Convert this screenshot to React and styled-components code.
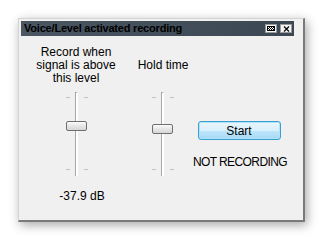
import React from 'react'
import styled, { createGlobalStyle } from 'styled-components'

const Global = createGlobalStyle`
  html, body {
    margin: 0;
    padding: 0;
    background: #ffffff;
  }
  body {
    font-family: "Liberation Sans", Arial, sans-serif;
    font-size: 12px;
    color: #000;
  }
`

const Page = styled.div`
  width: 323px;
  height: 240px;
  padding: 18px 0 0 18px;
  box-sizing: border-box;
`

const Window = styled.div`
  width: 287px;
  height: 204px;
  box-sizing: border-box;
  background: #f0f0f0;
  border-top: 1px solid #d4d4d4;
  border-left: 1px solid #d4d4d4;
  border-right: 2px solid #7a7a7a;
  border-bottom: 2px solid #7a7a7a;
  box-shadow: 2px 3px 10px rgba(0, 0, 0, 0.35);
  padding: 2px 9px 0 2px;
  display: flex;
  flex-direction: column;
`

const TitleBar = styled.div`
  height: 15px;
  background: linear-gradient(90deg, #4a5661, #3b4752);
  display: flex;
  align-items: center;
  padding: 0 2px 0 3px;
`

const Title = styled.div`
  flex: 1;
  font-weight: bold;
  font-size: 11px;
  letter-spacing: -0.2px;
  line-height: 15px;
  color: #000;
  white-space: nowrap;
`

const TitleButtons = styled.div`
  display: flex;
  gap: 3px;
`

const TitleButton = styled.div`
  width: 12px;
  height: 9px;
  box-sizing: border-box;
  background: #f4f4f4;
  border: 1px solid #9a9a9a;
  display: flex;
  align-items: center;
  justify-content: center;
`

const Body = styled.div`
  display: flex;
  flex: 1;
`

const Column = styled.div`
  width: ${p => p.$w}px;
  display: flex;
  flex-direction: column;
  align-items: center;
`

const LabelArea = styled.div`
  height: 50px;
  padding-top: 8px;
  box-sizing: border-box;
  display: flex;
  align-items: center;
  justify-content: center;
  text-align: center;
  line-height: 13px;
`

const SliderBox = styled.div`
  position: relative;
  width: 36px;
  height: 84px;
  margin-top: 6px;
  margin-left: ${p => p.$shift}px;
`

const Track = styled.div`
  position: absolute;
  left: 16px;
  top: 0;
  width: 1px;
  height: 83px;
  background: #a8a8a8;
  border-right: 2px solid #ffffff;
  border-top: 1px solid #a0a0a0;
`

const Tick = styled.div`
  position: absolute;
  width: 4px;
  height: 1px;
  background: #c0c0c0;
  top: ${p => p.$top}px;
  left: ${p => p.$left}px;
`

const Thumb = styled.div`
  position: absolute;
  left: 7px;
  top: ${p => p.$top}px;
  width: 21px;
  height: 10px;
  box-sizing: border-box;
  border: 1px solid #6e6e6e;
  border-radius: 2px;
  background: linear-gradient(#fbfbfb, #e6e6e6 50%, #d6d6d6);
`

const Value = styled.div`
  margin-top: 13px;
  padding-left: 12px;
`

const Actions = styled.div`
  display: flex;
  flex-direction: column;
  align-items: center;
  padding-top: 85px;
  width: 96px;
`

const StartButton = styled.button`
  width: 83px;
  height: 19px;
  margin-left: -8px;
  box-sizing: border-box;
  border: 1px solid #3c9fd1;
  border-radius: 3px;
  background: linear-gradient(#eaf6fd, #d9f0fc 50%, #bee6fd 51%, #a7d9f5);
  box-shadow: inset 0 0 0 1px #aee3fb;
  font-family: "Liberation Sans", Arial, sans-serif;
  font-size: 12px;
  color: #000;
  padding: 0;
`

const Status = styled.div`
  margin-top: 15px;
  margin-left: -6px;
  letter-spacing: -0.6px;
  white-space: nowrap;
`

function Slider({ thumb, shift = 0 }) {
  return (
    <SliderBox $shift={shift}>
      <Tick $top={5} $left={7} />
      <Tick $top={5} $left={25} />
      <Tick $top={77} $left={7} />
      <Tick $top={77} $left={25} />
      <Track />
      <Thumb $top={thumb} />
    </SliderBox>
  )
}

export default function App() {
  return (
    <Page>
      <Global />
      <Window>
        <TitleBar>
          <Title>Voice/Level activated recording</Title>
          <TitleButtons>
            <TitleButton>
              <svg width="8" height="5" viewBox="0 0 8 5">
                <rect width="8" height="5" fill="#000" />
                <rect x="1" y="1" width="1" height="1" fill="#fff" />
                <rect x="3" y="1" width="1" height="1" fill="#fff" />
                <rect x="5" y="1" width="1" height="1" fill="#fff" />
                <rect x="2" y="2" width="1" height="1" fill="#fff" />
                <rect x="4" y="2" width="1" height="1" fill="#fff" />
                <rect x="6" y="2" width="1" height="1" fill="#fff" />
                <rect x="1" y="3" width="1" height="1" fill="#fff" />
                <rect x="3" y="3" width="1" height="1" fill="#fff" />
                <rect x="5" y="3" width="1" height="1" fill="#fff" />
              </svg>
            </TitleButton>
            <TitleButton>
              <svg width="7" height="6" viewBox="0 0 7 6">
                <path d="M1 0.5 L6 5.5 M6 0.5 L1 5.5" stroke="#000" strokeWidth="1.2" />
              </svg>
            </TitleButton>
          </TitleButtons>
        </TitleBar>
        <Body>
          <Column $w={110}>
            <LabelArea>Record when<br />signal is above<br />this level</LabelArea>
            <Slider thumb={29} shift={2} />
            <Value>-37.9 dB</Value>
          </Column>
          <Column $w={64}>
            <LabelArea>Hold time</LabelArea>
            <Slider thumb={32} />
          </Column>
          <Actions>
            <StartButton>Start</StartButton>
            <Status>NOT RECORDING</Status>
          </Actions>
        </Body>
      </Window>
    </Page>
  )
}
